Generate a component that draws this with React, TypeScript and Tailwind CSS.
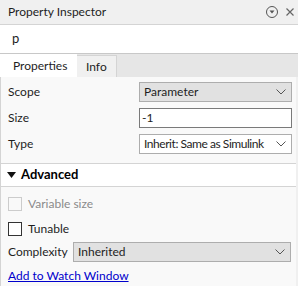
import React from "react";

const Chevron = () => (
  <svg width="10" height="6" viewBox="0 0 10 6" className="shrink-0">
    <path d="M0.5 0.5 L5 5 L9.5 0.5" fill="none" stroke="#555" strokeWidth="1" />
  </svg>
);

export default function App() {
  return (
    <div
      className="w-[298px] h-[286px] bg-[#f0f0f0] text-[12px] text-[#1e1e1e] overflow-hidden flex flex-col"
      style={{ fontFamily: "Lato, 'Liberation Sans', sans-serif" }}
    >
      {/* header */}
      <div className="h-[25px] shrink-0 flex items-center pl-[8px] pr-[3px] border-b border-[#d4d4d4]">
        <span className="flex-1">Property Inspector</span>
        <svg width="14" height="14" viewBox="0 0 14 14" className="mr-[6px]">
          <circle cx="7" cy="7" r="5.5" fill="none" stroke="#555" strokeWidth="1" />
          <path d="M4.5 5.5 L9.5 5.5 L7 8.5 Z" fill="#555" />
        </svg>
        <svg width="10" height="10" viewBox="0 0 10 10">
          <path d="M1.5 1.5 L8.5 8.5 M8.5 1.5 L1.5 8.5" stroke="#666" strokeWidth="1.2" />
        </svg>
      </div>
      {/* name */}
      <div className="h-[29px] shrink-0 bg-white flex items-center pl-[12px] border-b border-[#c8c8c8] text-[13px]">
        p
      </div>
      {/* tabs */}
      <div className="h-[23px] shrink-0 bg-[#e6e6e6] flex items-stretch">
        <div className="w-[77px] bg-white flex items-center pl-[13px]">Properties</div>
        <div className="w-[40px] bg-[#f0f0f0] border-t border-r border-[#d4d4d4] flex items-center pl-[9px] mt-[1px]">Info</div>
      </div>
      {/* content */}
      <div className="flex-1 w-[296px] bg-[#f9f9f9] border-l border-[#d4d4d4] flex flex-col">
        <div className="flex flex-col gap-[6px] pt-[5px] pl-[7px] pr-[4px]">
          <div className="flex items-center h-[20px]">
            <span className="w-[131px]">Scope</span>
            <div className="flex-1 h-[20px] bg-[#e1e1e1] border border-[#adadad] flex items-center pl-[4px] pr-[5px]">
              <span className="flex-1">Parameter</span>
              <Chevron />
            </div>
          </div>
          <div className="flex items-center h-[20px]">
            <span className="w-[131px]">Size</span>
            <div className="flex-1 h-[20px] bg-white border border-[#7a7a7a] flex items-center pl-[2px]">
              -1
            </div>
          </div>
          <div className="flex items-center h-[20px]">
            <span className="w-[131px]">Type</span>
            <div className="flex-1 h-[20px] bg-white border border-[#adadad] flex items-center pl-[4px] pr-[5px]">
              <span className="flex-1 whitespace-nowrap tracking-[-0.45px]">Inherit: Same as Simulink</span>
              <Chevron />
            </div>
          </div>
        </div>
        <div className="mt-[9px] h-[24px] bg-white border-y border-[#d4d4d4] flex items-center pl-[6px] font-bold text-[13px] text-black">
          <svg width="9" height="6" viewBox="0 0 9 6" className="mr-[5px]">
            <path d="M0 0 L9 0 L4.5 6 Z" fill="#111" />
          </svg>
          Advanced
        </div>
        <div className="flex flex-col pl-[7px] pr-[5px]">
          <div className="flex items-center h-[25px] mt-[4px] text-[#8a8a8a]">
            <span className="w-[14px] h-[14px] border border-[#cccccc] bg-[#f9f9f9] mr-[6px]" />
            Variable size
          </div>
          <div className="flex items-center h-[25px]">
            <span className="w-[14px] h-[14px] border border-[#333] bg-white mr-[6px]" />
            Tunable
          </div>
          <div className="flex items-center h-[20px] mt-[1px]">
            <span className="w-[65px]">Complexity</span>
            <div className="flex-1 h-[20px] bg-[#e1e1e1] border border-[#adadad] flex items-center pl-[4px] pr-[5px]">
              <span className="flex-1">Inherited</span>
              <Chevron />
            </div>
          </div>
          <a className="mt-[5px] text-[#0000cc] underline" href="#">Add to Watch Window</a>
        </div>
      </div>
    </div>
  );
}
